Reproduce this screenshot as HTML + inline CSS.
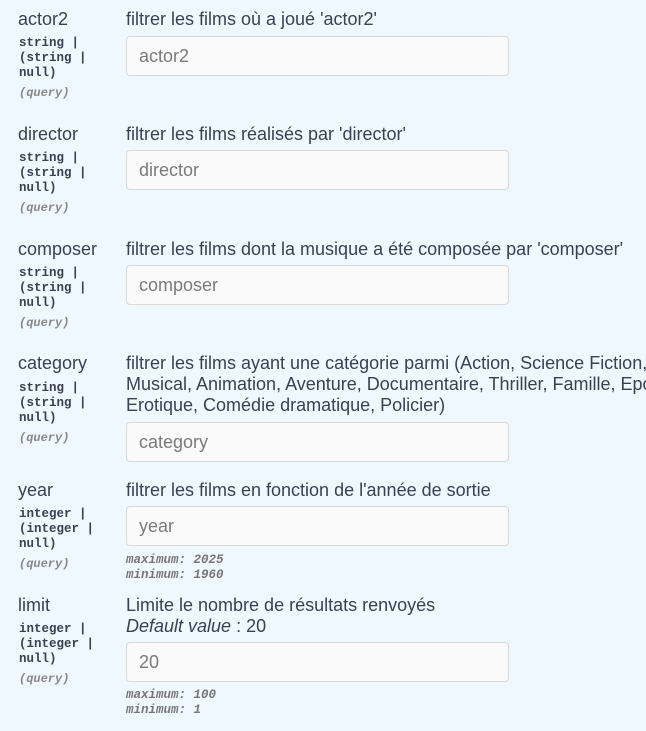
<!DOCTYPE html>
<html><head><meta charset="utf-8"><style>
html,body{margin:0;padding:0;}
body{width:646px;height:731px;background:#eff7ff;position:relative;overflow:hidden;font-family:"Liberation Sans",sans-serif;color:#3b4151;}
.n{position:absolute;left:18px;font-size:18px;line-height:20px;}
.t{position:absolute;left:19px;font-family:"Liberation Mono",monospace;font-weight:bold;font-size:12.5px;line-height:15px;white-space:pre;}
.q{position:absolute;left:19px;font-family:"Liberation Mono",monospace;font-style:italic;font-weight:bold;font-size:12px;color:#888;line-height:15px;}
.d{position:absolute;left:126px;font-size:18px;line-height:21px;white-space:nowrap;}
.i{position:absolute;left:126px;width:381px;height:38px;border:1px solid #d9d9d9;border-radius:4px;background:#fafafa;box-sizing:content-box;font-size:18px;line-height:38px;color:#7a7a7a;}
.i span{padding-left:12px;}
.m{position:absolute;left:126px;font-family:"Liberation Mono",monospace;font-style:italic;font-weight:bold;font-size:12.5px;line-height:15px;color:#777;}
</style></head><body>

<div class="n" style="top:9px">actor2</div>
<div class="t" style="top:36px">string |
(string |
null)</div>
<div class="q" style="top:86px">(query)</div>
<div class="d" style="top:9px">filtrer les films où a joué 'actor2'</div>
<div class="i" style="top:36px"><span>actor2</span></div>

<div class="n" style="top:124px">director</div>
<div class="t" style="top:151px">string |
(string |
null)</div>
<div class="q" style="top:201px">(query)</div>
<div class="d" style="top:124px">filtrer les films réalisés par 'director'</div>
<div class="i" style="top:150px"><span>director</span></div>

<div class="n" style="top:239px">composer</div>
<div class="t" style="top:266px">string |
(string |
null)</div>
<div class="q" style="top:316px">(query)</div>
<div class="d" style="top:239px">filtrer les films dont la musique a été composée par 'composer'</div>
<div class="i" style="top:265px"><span>composer</span></div>

<div class="n" style="top:353px">category</div>
<div class="t" style="top:381px">string |
(string |
null)</div>
<div class="q" style="top:431px">(query)</div>
<div class="d" style="top:353px">filtrer les films ayant une catégorie parmi (Action, Science Fiction,<br>Musical, Animation, Aventure, Documentaire, Thriller, Famille, Epoque,<br>Erotique, Comédie dramatique, Policier)</div>
<div class="i" style="top:422px"><span>category</span></div>

<div class="n" style="top:480px">year</div>
<div class="t" style="top:507px">integer |
(integer |
null)</div>
<div class="q" style="top:557px">(query)</div>
<div class="d" style="top:480px">filtrer les films en fonction de l'année de sortie</div>
<div class="i" style="top:506px"><span>year</span></div>
<div class="m" style="top:553px">maximum: 2025<br>minimum: 1960</div>

<div class="n" style="top:595px">limit</div>
<div class="t" style="top:622px">integer |
(integer |
null)</div>
<div class="q" style="top:672px">(query)</div>
<div class="d" style="top:595px">Limite le nombre de résultats renvoyés<br><i>Default value</i> : 20</div>
<div class="i" style="top:642px"><span>20</span></div>
<div class="m" style="top:688px">maximum: 100<br>minimum: 1</div>

</body></html>
